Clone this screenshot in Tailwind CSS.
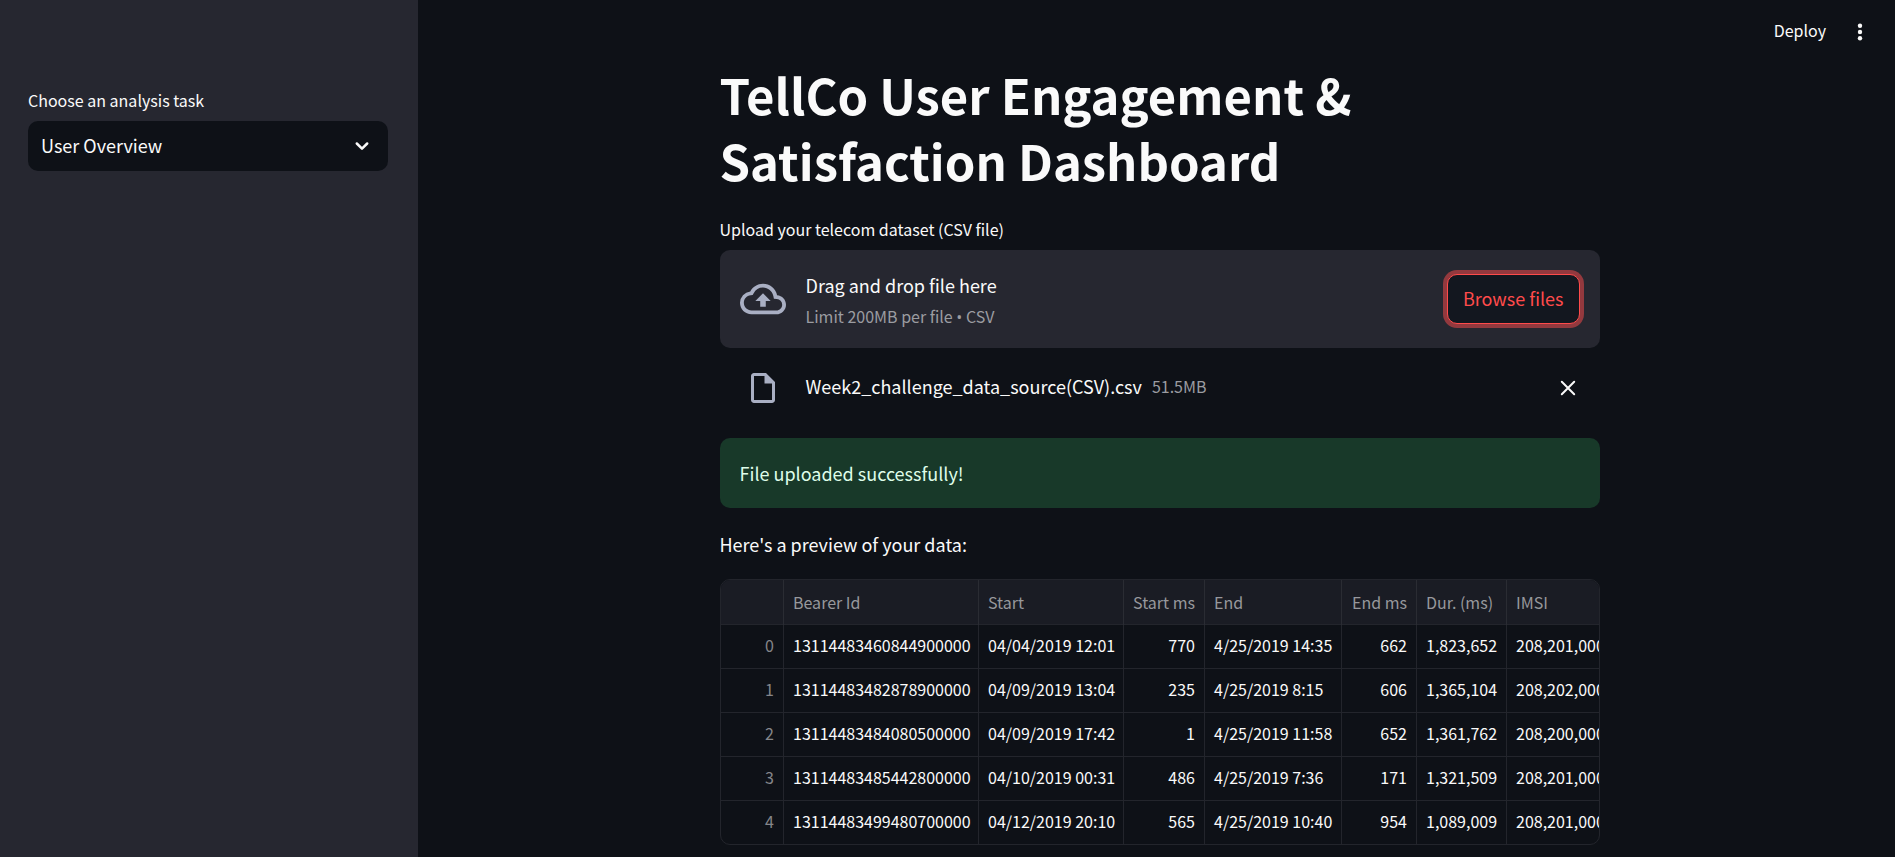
<!DOCTYPE html>
<html lang="en">
<head>
<meta charset="utf-8">
<meta name="viewport" content="width=device-width, initial-scale=1">
<title>TellCo User Engagement &amp; Satisfaction Dashboard</title>
<script src="https://cdn.jsdelivr.net/npm/@tailwindcss/browser@4"></script>
</head>
<body class="flex min-h-screen bg-[#0e1117] font-['Noto_Sans_CJK_SC','Open_Sans',sans-serif] text-[18px] leading-8 text-[#fafafa]">
  <aside class="w-[418px] shrink-0 bg-[#262730] pt-[87px] pr-[30px] pl-7">
    <label for="task" class="block text-[16px] leading-[26px]">Choose an analysis task</label>
    <div class="relative mt-2">
      <select id="task" class="h-[50px] w-full appearance-none rounded-[10px] bg-[#0e1117] px-[13px] pb-0.5 text-[18px]">
        <option>User Overview</option>
      </select>
      <svg class="pointer-events-none absolute top-[15px] right-4 size-5" viewBox="0 0 20 20" fill="none" stroke="currentColor" stroke-width="2.5" stroke-linecap="round" stroke-linejoin="round"><path d="M4.8 7.5 10 12.6 15.2 7.5"/></svg>
    </div>
  </aside>

  <div class="min-w-0 flex-1 pl-1.5">
    <header class="flex h-[61px] items-center justify-end gap-6 pr-[25px]">
      <button type="button" class="pb-0.5 text-[16px] leading-6">Deploy</button>
      <button type="button" aria-label="Menu"><svg class="mt-0.5 size-5" viewBox="0 0 20 20" fill="currentColor"><circle cx="10" cy="3.7" r="2.2"/><circle cx="10" cy="10" r="2.2"/><circle cx="10" cy="16.3" r="2.2"/></svg></button>
    </header>

    <main class="mx-auto w-full max-w-[880px]">
      <h1 class="text-[49px] leading-[66px] font-bold">TellCo User Engagement &amp; Satisfaction Dashboard</h1>

      <section>
        <label for="browse" class="mt-6 block text-[16px] leading-6">Upload your telecom dataset (CSV file)</label>
        <div class="mt-[9px] flex items-center rounded-[10px] bg-[#262730] px-5 py-[19px]">
          <svg class="mr-5 size-[46px] shrink-0 text-[#a9afc3]" viewBox="0 0 24 24" fill="currentColor"><path d="M19.35 10.04A7.49 7.49 0 0 0 12 4C9.11 4 6.6 5.64 5.35 8.04A5.994 5.994 0 0 0 0 14c0 3.31 2.69 6 6 6h13c2.76 0 5-2.24 5-5 0-2.64-2.05-4.78-4.65-4.96zM19 18H6c-2.21 0-4-1.79-4-4 0-2.05 1.53-3.76 3.56-3.97l1.07-.11.5-.95A5.469 5.469 0 0 1 12 6c2.62 0 4.88 1.86 5.39 4.43l.3 1.5 1.53.11A2.98 2.98 0 0 1 22 15c0 1.65-1.35 3-3 3zM8 13h2.55v3h2.9v-3H16l-4-4z"/></svg>
          <div class="flex-1">
            <div>Drag and drop file here</div>
            <div class="mt-0.5 text-[16px] leading-[26px] text-[#9b9ca1]">Limit 200MB per file <span class="font-['Open_Sans',sans-serif] leading-none">•</span> CSV</div>
          </div>
          <button id="browse" type="button" class="h-[50px] shrink-0 rounded-[10px] border border-[#ff4b4b] bg-[#13171f] px-[15px] pb-0.5 text-[#ff4b4b] ring-4 ring-[#ff4b4b]/50">Browse files</button>
        </div>

        <div class="mt-[18px] flex items-center pr-[22px] pl-[25px]">
          <svg class="mt-1 mr-[25px] size-9 shrink-0 text-[#a9afc3]" viewBox="0 0 24 24" fill="currentColor"><path d="M14 2H6c-1.1 0-2 .9-2 2v16c0 1.1.9 2 2 2h12c1.1 0 2-.9 2-2V8l-6-6zM6 20V4h7v5h5v11H6z"/></svg>
          <span class="mr-2.5">Week2_challenge_data_source(CSV).csv</span>
          <span class="flex-1 text-[16px] text-[#9b9ca1]">51.5MB</span>
          <button type="button" aria-label="Remove file"><svg class="mt-1 size-5" viewBox="0 0 20 20" fill="none" stroke="currentColor" stroke-width="2" stroke-linecap="round"><path d="M3.8 3.8 16.2 16.2M16.2 3.8 3.8 16.2"/></svg></button>
        </div>
      </section>

      <div role="alert" class="mt-8 rounded-[10px] bg-[#183929] px-5 py-[19px] text-[#dffde9]">File uploaded successfully!</div>
      <p class="mt-5">Here's a preview of your data:</p>

      <div class="mt-[19px] overflow-hidden rounded-[10px] border border-[#23252c]">
        <table class="w-[1050px] table-fixed border-collapse text-[16px] leading-6 whitespace-nowrap [&_td]:h-11 [&_td]:border-t [&_td]:border-r [&_td]:border-[#23252c] [&_td]:px-[9px] [&_td]:pb-0.5 [&_th]:h-11 [&_th]:border-r [&_th]:border-[#2a2c33] [&_th]:px-[9px] [&_th]:font-normal">
          <colgroup><col class="w-[63px]"><col class="w-[195px]"><col class="w-[145px]"><col class="w-[81px]"><col class="w-[137px]"><col class="w-[75px]"><col class="w-[90px]"><col></colgroup>
          <thead class="bg-[#1a1c24] text-left text-[#97989c]">
            <tr><th></th><th>Bearer Id</th><th>Start</th><th class="text-right">Start ms</th><th>End</th><th class="text-right">End ms</th><th>Dur. (ms)</th><th>IMSI</th></tr>
          </thead>
          <tbody>
            <tr><td class="text-right text-[#85868a]">0</td><td>13114483460844900000</td><td>04/04/2019 12:01</td><td class="text-right">770</td><td>4/25/2019 14:35</td><td class="text-right">662</td><td class="text-right">1,823,652</td><td>208,201,000,000,000</td></tr>
            <tr><td class="text-right text-[#85868a]">1</td><td>13114483482878900000</td><td>04/09/2019 13:04</td><td class="text-right">235</td><td>4/25/2019 8:15</td><td class="text-right">606</td><td class="text-right">1,365,104</td><td>208,202,000,000,000</td></tr>
            <tr><td class="text-right text-[#85868a]">2</td><td>13114483484080500000</td><td>04/09/2019 17:42</td><td class="text-right">1</td><td>4/25/2019 11:58</td><td class="text-right">652</td><td class="text-right">1,361,762</td><td>208,200,000,000,000</td></tr>
            <tr><td class="text-right text-[#85868a]">3</td><td>13114483485442800000</td><td>04/10/2019 00:31</td><td class="text-right">486</td><td>4/25/2019 7:36</td><td class="text-right">171</td><td class="text-right">1,321,509</td><td>208,201,000,000,000</td></tr>
            <tr><td class="text-right text-[#85868a]">4</td><td>13114483499480700000</td><td>04/12/2019 20:10</td><td class="text-right">565</td><td>4/25/2019 10:40</td><td class="text-right">954</td><td class="text-right">1,089,009</td><td>208,201,000,000,000</td></tr>
          </tbody>
        </table>
      </div>
    </main>
  </div>
</body>
</html>
